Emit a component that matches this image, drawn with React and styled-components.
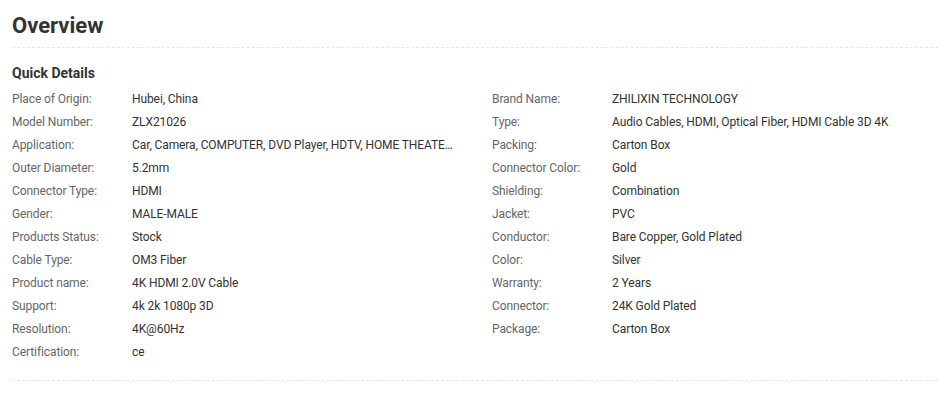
import React from 'react';
import styled, { createGlobalStyle } from 'styled-components';

const GlobalStyle = createGlobalStyle`
  body {
    margin: 0;
    background: #fff;
    font-family: Roboto, "Liberation Sans", Arial, sans-serif;
  }
`;

const Wrapper = styled.div`
  width: 926px;
  margin-left: 12px;
  padding-top: 10px;
`;

const Title = styled.h2`
  margin: 0;
  font-size: 22px;
  line-height: 32px;
  font-weight: 700;
  color: #333;
  padding-bottom: 5px;
  border-bottom: 1px dashed #e6e6e6;
`;

const Section = styled.div`
  padding-bottom: 16px;
  border-bottom: 1px dashed #e6e6e6;
`;

const SubTitle = styled.h3`
  margin: 15px 0 5px;
  font-size: 14px;
  line-height: 20px;
  font-weight: 700;
  color: #333;
`;

const DetailList = styled.ul`
  list-style: none;
  margin: 0;
  padding: 0;
  display: grid;
  grid-template-columns: 480px 1fr;
`;

const DetailItem = styled.li`
  display: flex;
  font-size: 12px;
  line-height: 23px;
  letter-spacing: -0.1px;
  min-width: 0;
  padding-right: 38px;
`;

const Label = styled.span`
  flex: 0 0 120px;
  color: #666;
`;

const Value = styled.span`
  flex: 1;
  min-width: 0;
  color: #333;
  white-space: nowrap;
  overflow: hidden;
  text-overflow: ellipsis;
`;

const details = [
  ['Place of Origin:', 'Hubei, China'],
  ['Brand Name:', 'ZHILIXIN TECHNOLOGY'],
  ['Model Number:', 'ZLX21026'],
  ['Type:', 'Audio Cables, HDMI, Optical Fiber, HDMI Cable 3D 4K'],
  ['Application:', 'Car, Camera, COMPUTER, DVD Player, HDTV, HOME THEATER, MULTIMEDIA'],
  ['Packing:', 'Carton Box'],
  ['Outer Diameter:', '5.2mm'],
  ['Connector Color:', 'Gold'],
  ['Connector Type:', 'HDMI'],
  ['Shielding:', 'Combination'],
  ['Gender:', 'MALE-MALE'],
  ['Jacket:', 'PVC'],
  ['Products Status:', 'Stock'],
  ['Conductor:', 'Bare Copper, Gold Plated'],
  ['Cable Type:', 'OM3 Fiber'],
  ['Color:', 'Silver'],
  ['Product name:', '4K HDMI 2.0V Cable'],
  ['Warranty:', '2 Years'],
  ['Support:', '4k 2k 1080p 3D'],
  ['Connector:', '24K Gold Plated'],
  ['Resolution:', '4K@60Hz'],
  ['Package:', 'Carton Box'],
  ['Certification:', 'ce'],
];

const App = () => (
  <>
    <GlobalStyle />
    <Wrapper>
      <Title>Overview</Title>
      <Section>
        <SubTitle>Quick Details</SubTitle>
        <DetailList>
          {details.map(([label, value]) => (
            <DetailItem key={label}>
              <Label>{label}</Label>
              <Value>{value}</Value>
            </DetailItem>
          ))}
        </DetailList>
      </Section>
    </Wrapper>
  </>
);

export default App;
